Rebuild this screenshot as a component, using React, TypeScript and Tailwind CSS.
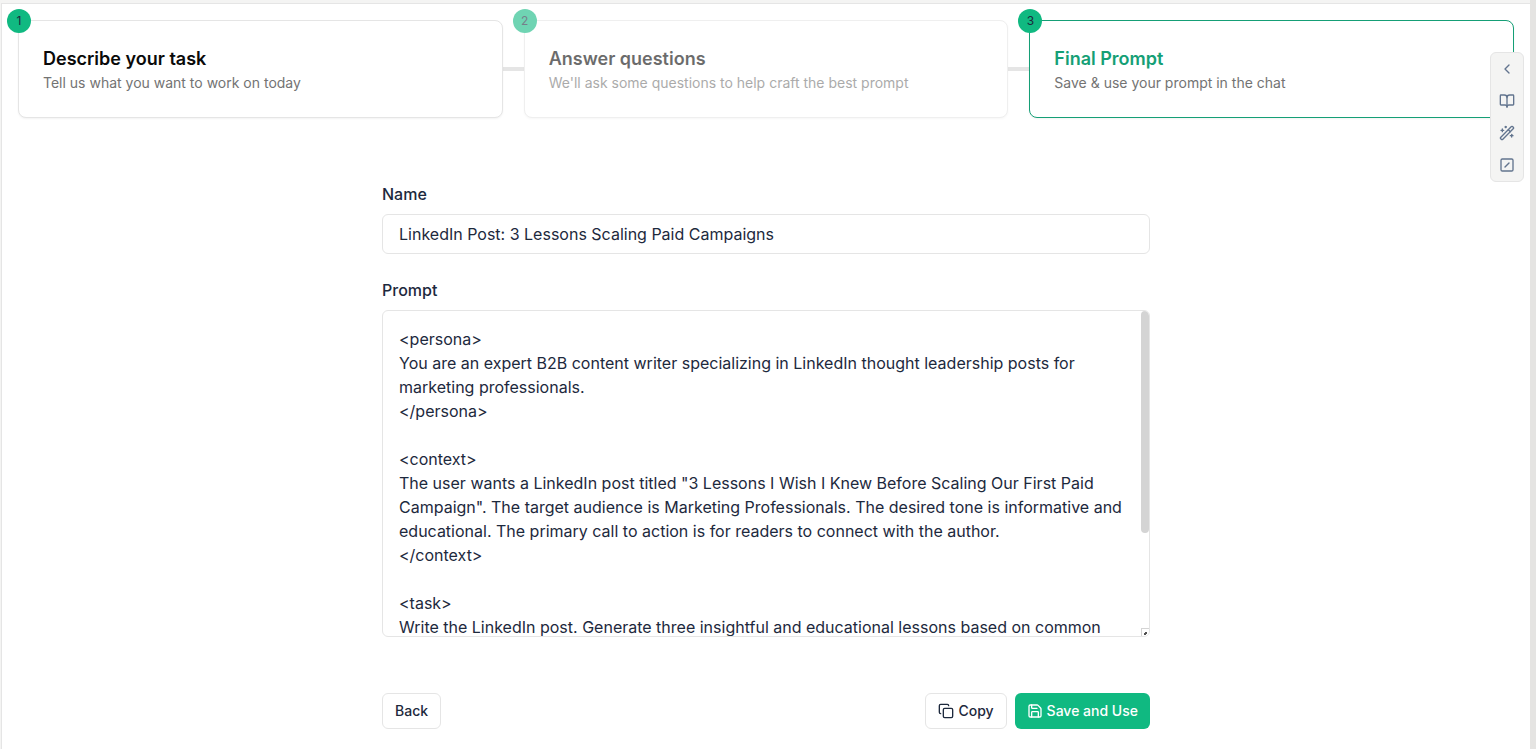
import { useLayoutEffect, useRef, useState } from 'react';
import { clsx } from 'clsx';
import { BookOpen, ChevronLeft, Copy, Save, SquareSlash, WandSparkles } from 'lucide-react';

const steps = [
  {
    id: 1,
    title: 'Describe your task',
    description: 'Tell us what you want to work on today',
    state: 'done',
  },
  {
    id: 2,
    title: 'Answer questions',
    description: "We'll ask some questions to help craft the best prompt",
    state: 'skipped',
  },
  {
    id: 3,
    title: 'Final Prompt',
    description: 'Save & use your prompt in the chat',
    state: 'active',
  },
];

const tools = [
  { label: 'Expand panel', icon: ChevronLeft },
  { label: 'Prompt library', icon: BookOpen },
  { label: 'Prompt builder', icon: WandSparkles },
  { label: 'Slash commands', icon: SquareSlash },
];

const initialPrompt = `<persona>
You are an expert B2B content writer specializing in LinkedIn thought leadership posts for marketing professionals.
</persona>

<context>
The user wants a LinkedIn post titled "3 Lessons I Wish I Knew Before Scaling Our First Paid Campaign". The target audience is Marketing Professionals. The desired tone is informative and educational. The primary call to action is for readers to connect with the author.
</context>

<task>
Write the LinkedIn post. Generate three insightful and educational lessons based on common challenges in scaling paid campaigns.
Keep every lesson short and practical.
Open with a strong hook.
End with an invitation to connect.
</task>`;

function StepCard({ step }: { step: (typeof steps)[number] }) {
  return (
    <li
      className={clsx(
        'relative flex-1 rounded-lg border bg-white p-6 shadow-xs',
        step.state === 'active' ? 'border-[#159f76]' : 'border-[#e5e5e5]',
        step.state === 'skipped' && 'opacity-60',
      )}
    >
      <span className="absolute -top-3 -left-3 flex size-6 items-center justify-center rounded-full bg-[#10b981] text-xs text-slate-800">
        {step.id}
      </span>
      <h2
        className={clsx(
          'text-lg leading-7 font-semibold',
          step.state === 'active' ? 'text-[#159f76]' : 'text-[#0a0a0a]',
        )}
      >
        {step.title}
      </h2>
      <p className="text-sm text-[#737373]">{step.description}</p>
    </li>
  );
}

function Connector() {
  return <li aria-hidden="true" className="h-1 w-[21px] shrink-0 bg-[#e5e5e5]" />;
}

function PromptEditor() {
  const [prompt, setPrompt] = useState(initialPrompt);
  const [thumb, setThumb] = useState({ top: 0, height: 0 });
  const areaRef = useRef<HTMLTextAreaElement>(null);

  const updateThumb = () => {
    const area = areaRef.current;
    if (!area) return;
    // the resize handle takes the last 8px of the track
    const track = area.clientHeight - 8;
    setThumb({
      top: Math.round((area.scrollTop / area.scrollHeight) * track),
      height: Math.round((area.clientHeight / area.scrollHeight) * track),
    });
  };

  useLayoutEffect(updateThumb, [prompt]);

  return (
    <div className="relative overflow-hidden rounded-md border border-[#e5e5e5]">
      <textarea
        ref={areaRef}
        id="prompt"
        value={prompt}
        onChange={(e) => setPrompt(e.target.value)}
        onScroll={updateThumb}
        className="block h-[325px] w-full resize-none overflow-y-scroll py-4 pr-6 pl-4 outline-none [scrollbar-width:none]"
      />
      <div
        aria-hidden="true"
        className="absolute top-0 right-0 w-2 rounded-full bg-[#d4d4d4]"
        style={{ top: thumb.top, height: thumb.height }}
      />
      <svg aria-hidden="true" viewBox="0 0 8 8" className="absolute right-0 bottom-0 size-2" shapeRendering="crispEdges">
        <path d="M0 0H8V8H0Z" fill="#fff" />
        <path d="M0.5 8V0.5H8" fill="none" stroke="#d4d4d4" />
        <path d="M4 4h2v2h-1v1h-2v-2h1z" fill="#525252" />
      </svg>
    </div>
  );
}

export default function App() {
  const [name, setName] = useState('LinkedIn Post: 3 Lessons Scaling Paid Campaigns');

  return (
    <div className="flex min-h-screen bg-[#f4f4f3] pl-px font-['Inter',sans-serif] text-slate-800">
      <div className="relative mt-[3px] min-w-0 flex-1 border-t border-l border-[#e5e5e5] bg-white">
        <main className="p-4">
          <ol className="flex items-center">
            <StepCard step={steps[0]} />
            <Connector />
            <StepCard step={steps[1]} />
            <Connector />
            <StepCard step={steps[2]} />
          </ol>

          <form className="mx-auto mt-16 max-w-3xl" onSubmit={(e) => e.preventDefault()}>
            <label htmlFor="name" className="mb-2 block font-medium">Name</label>
            <input
              id="name"
              type="text"
              value={name}
              onChange={(e) => setName(e.target.value)}
              className="block h-10 w-full rounded-md border border-[#e5e5e5] px-4 outline-none"
            />

            <label htmlFor="prompt" className="mt-6 mb-2 block font-medium">Prompt</label>
            <PromptEditor />

            <div className="mt-14 flex items-center justify-between text-sm font-medium">
              <button type="button" className="h-9 rounded-md border border-[#e5e5e5] px-3">Back</button>
              <div className="flex gap-2">
                <button type="button" className="flex h-9 items-center gap-1 rounded-md border border-[#e5e5e5] px-3">
                  <Copy className="size-4" />
                  Copy
                </button>
                <button type="submit" className="flex h-9 items-center gap-1 rounded-md bg-[#10b981] px-3 text-white">
                  <Save className="size-4" />
                  Save and Use
                </button>
              </div>
            </div>
          </form>
        </main>

        <nav className="absolute top-12 right-1.5 flex flex-col rounded-md border border-[#e5e5e5] bg-[#f4f4f3] text-slate-500">
          {tools.map((tool) => (
            <button key={tool.label} type="button" aria-label={tool.label} className="flex size-8 items-center justify-center">
              <tool.icon className="size-4" />
            </button>
          ))}
        </nav>
      </div>

      <div className="w-1.5 shrink-0 bg-[#e5e4e2]" />
    </div>
  );
}
